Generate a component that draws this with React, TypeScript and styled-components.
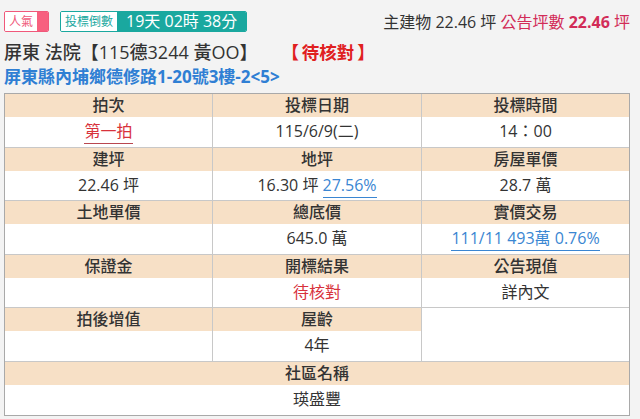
import React from "react";
import styled, { createGlobalStyle } from "styled-components";

const Global = createGlobalStyle`
  html, body { margin: 0; padding: 0; background: #f3f3f3; }
  body { font-family: "Open Sans", "Noto Sans CJK TC", sans-serif; color: #333; }
`;

const Page = styled.div`
  width: 640px;
  height: 419px;
  box-sizing: border-box;
  padding: 11px 10px 0 4px;
  overflow: hidden;
`;

const TopBar = styled.div`
  display: flex;
  align-items: center;
  height: 20px;
`;

const Badge = styled.div<{ $c: string }>`
  display: flex;
  height: 21px;
  box-sizing: border-box;
  border: 1px solid ${(p) => p.$c};
  border-radius: 2px;
  overflow: hidden;
  margin-right: 11px;
`;

const BadgeLabel = styled.span<{ $c: string }>`
  background: #fff;
  color: ${(p) => p.$c};
  font-size: 12px;
  line-height: 19px;
  padding: 0 4px;
`;

const BadgeFill = styled.span<{ $c: string; $w?: number }>`
  background: ${(p) => p.$c};
  color: #fff;
  font-size: 16px;
  line-height: 19px;
  padding: 0 ${(p) => (p.$w ? 0 : 9)}px;
  min-width: ${(p) => p.$w ?? 0}px;
  box-sizing: border-box;
`;

const Area = styled.div`
  margin-left: auto;
  font-size: 16px;
  color: #333;
  white-space: nowrap;
`;

const Pink = styled.span<{ $bold?: boolean }>`
  color: #d22c58;
  font-weight: ${(p) => (p.$bold ? 700 : 400)};
`;

const Title = styled.div`
  margin-top: 9px;
  font-size: 18px;
  line-height: 24px;
  font-weight: 500;
  color: #333;
  display: flex;
  white-space: nowrap;
`;

const Status = styled.span`
  color: #e0201f;
  font-weight: 700;
  font-size: 17.5px;
  margin-left: 24px;
`;

const Address = styled.div`
  margin-top: 2px;
  font-size: 17px;
  line-height: 22px;
  font-weight: 700;
  color: #2f7fd4;
  white-space: nowrap;
`;

const Table = styled.div`
  margin-top: 5px;
  border: 1px solid #a9a9a9;
  background: #fff;
  width: 626px;
  box-sizing: border-box;
`;

const Group = styled.div<{ $last?: boolean }>`
  display: grid;
  grid-template-columns: 208px 209px 1fr;
  border-bottom: ${(p) => (p.$last ? "none" : "1px solid #c8c8c8")};
`;

const Cell = styled.div<{ $span?: boolean }>`
  display: flex;
  flex-direction: column;
  border-right: 1px solid #c8c8c8;
  grid-column: ${(p) => (p.$span ? "1 / -1" : "auto")};
  &:last-child { border-right: none; }
`;

const Head = styled.div`
  background: #f7e0c6;
  height: 23px;
  line-height: 23px;
  text-align: center;
  font-size: 16px;
  font-weight: 500;
  color: #333;
`;

const Value = styled.div`
  height: 29.6px;
  line-height: 29.6px;
  text-align: center;
  font-size: 16px;
  color: #333;
`;

const Red = styled.span<{ $u?: boolean }>`
  color: #d8323c;
  ${(p) => (p.$u ? "border-bottom: 1px solid #b9474f; padding-bottom: 1px;" : "")}
`;

const Link = styled.span`
  color: #3a86d2;
  border-bottom: 1px solid #3a86d2;
  padding-bottom: 1px;
`;

type C = { h?: string; v?: React.ReactNode; span?: boolean };

const groups: C[][] = [
  [
    { h: "拍次", v: <Red $u>第一拍</Red> },
    { h: "投標日期", v: "115/6/9(二)" },
    { h: "投標時間", v: "14：00" },
  ],
  [
    { h: "建坪", v: "22.46 坪" },
    { h: "地坪", v: <>16.30 坪 <Link>27.56%</Link></> },
    { h: "房屋單價", v: "28.7 萬" },
  ],
  [
    { h: "土地單價", v: "" },
    { h: "總底價", v: "645.0 萬" },
    { h: "實價交易", v: <Link>111/11 493萬 0.76%</Link> },
  ],
  [
    { h: "保證金", v: "" },
    { h: "開標結果", v: <Red>待核對</Red> },
    { h: "公告現值", v: "詳內文" },
  ],
  [
    { h: "拍後增值", v: "" },
    { h: "屋齡", v: "4年" },
    {},
  ],
  [{ h: "社區名稱", v: "瑛盛豐", span: true }],
];

export default function App() {
  return (
    <Page>
      <Global />
      <TopBar>
        <Badge $c="#f0587a">
          <BadgeLabel $c="#f0587a">人氣</BadgeLabel>
          <BadgeFill $c="#f7607f" $w={11} />
        </Badge>
        <Badge $c="#1aa89f">
          <BadgeLabel $c="#1aa89f">投標倒數</BadgeLabel>
          <BadgeFill $c="#1aa89f">19天 02時 38分</BadgeFill>
        </Badge>
        <Area>
          主建物 22.46 坪 <Pink>公告坪數</Pink> <Pink $bold>22.46</Pink> <Pink>坪</Pink>
        </Area>
      </TopBar>
      <Title>
        屏東 法院【115德3244 黃OO】<Status>{"【\u2009待核對\u2009】"}</Status>
      </Title>
      <Address>屏東縣內埔鄉德修路1-20號3樓-2&lt;5&gt;</Address>
      <Table>
        {groups.map((g, i) => (
          <Group key={i} $last={i === groups.length - 1}>
            {g.map((c, j) => (
              <Cell key={j} $span={c.span}>
                {c.h !== undefined && <Head>{c.h}</Head>}
                {c.h !== undefined && <Value>{c.v}</Value>}
              </Cell>
            ))}
          </Group>
        ))}
      </Table>
    </Page>
  );
}
